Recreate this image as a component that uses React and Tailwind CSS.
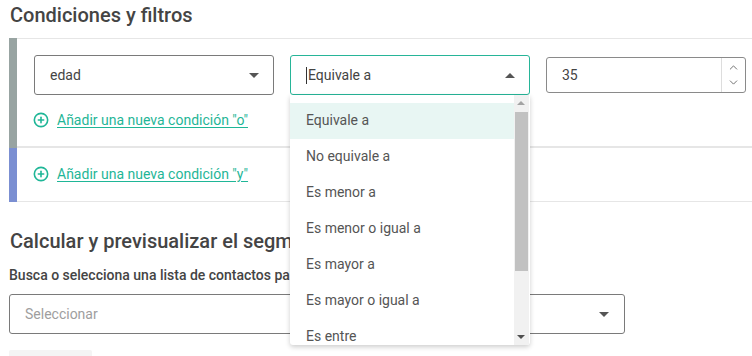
import React from "react";
import { CirclePlus, ChevronUp, ChevronDown } from "lucide-react";

const items = [
  "Equivale a",
  "No equivale a",
  "Es menor a",
  "Es menor o igual a",
  "Es mayor a",
  "Es mayor o igual a",
  "Es entre",
];

function Caret({ up }) {
  return up ? (
    <span className="block w-0 h-0 border-l-[5px] border-r-[5px] border-b-[5px] border-l-transparent border-r-transparent border-b-[#555]" />
  ) : (
    <span className="block w-0 h-0 border-l-[5px] border-r-[5px] border-t-[5px] border-l-transparent border-r-transparent border-t-[#555]" />
  );
}

function AddLink({ label }) {
  return (
    <div className="flex items-center h-[20px] text-[#1fb697]">
      <CirclePlus size={16} strokeWidth={2.4} className="ml-[-1px]" />
      <span className="ml-[8px] text-[14px] underline underline-offset-2 leading-[20px]">{label}</span>
    </div>
  );
}

export default function App() {
  return (
    <div
      className="relative w-[752px] h-[356px] overflow-hidden bg-white"
      style={{ fontFamily: "Roboto, 'Liberation Sans', sans-serif" }}
    >
      <div className="h-[38px] pt-px pl-[10px]">
        <h1 className="text-[20px] leading-[28px] font-medium text-[#444]">Condiciones y filtros</h1>
      </div>

      {/* group 1 */}
      <div className="flex">
        <div className="ml-[9px] w-[8px] bg-[#98a4a2]" />
        <div className="flex-1 border-t border-[#e6e6e6] border-b-2 border-b-[#e6e6e6] pl-[17px] pt-[16px] pb-[16px]">
          <div className="flex items-center gap-[16px]">
            <div className="w-[240px] h-[40px] border border-[#7a7a7a] rounded-[3px] flex items-center justify-between pl-[15px] pr-[14px] text-[14px] text-[#444]">
              <span>edad</span>
              <Caret />
            </div>
            <div className="w-[240px] h-[40px] border border-[#27b598] rounded-[3px] flex items-center justify-between pl-[15px] pr-[14px] text-[14px] text-[#444]">
              <span className="flex items-center">
                <span className="w-px h-[17px] bg-[#333] mr-px" />
                Equivale a
              </span>
              <Caret up />
            </div>
            <div className="w-[200px] h-[36px] border border-[#8a8a8a] rounded-[3px] flex items-stretch text-[14px] text-[#444]">
              <span className="flex-1 flex items-center pl-[15px]">35</span>
              <div className="w-[24px] border-l border-[#ddd] flex flex-col items-center justify-center text-[#6f6f6f]">
                <ChevronUp size={13} strokeWidth={1.8} />
                <ChevronDown size={13} strokeWidth={1.8} className="mt-[2px]" />
              </div>
            </div>
          </div>
          <div className="mt-[15px]">
            <AddLink label={'Añadir una nueva condición "o"'} />
          </div>
        </div>
      </div>

      {/* group 2 */}
      <div className="flex">
        <div className="ml-[9px] w-[8px] bg-[#7b8fd2]" />
        <div className="flex-1 border-b border-[#e6e6e6] pl-[17px] pt-[16px] pb-[17px]">
          <AddLink label={'Añadir una nueva condición "y"'} />
        </div>
      </div>

      {/* section 2 */}
      <div className="pl-[9px]">
        <h2 className="mt-[25px] pl-px text-[20px] leading-[28px] font-medium text-[#444]">
          Calcular y previsualizar el segmento
        </h2>
        <p className="mt-[10px] text-[14px] leading-[20px] font-medium text-[#444]">
          Busca o selecciona una lista de contactos para calcular
        </p>
        <div className="mt-[9px] w-[616px] h-[40px] border border-[#7a7a7a] rounded-[3px] flex items-center justify-between pl-[15px] pr-[15px] text-[14px] text-[#9e9e9e]">
          <span>Seleccionar</span>
          <Caret />
        </div>
        <div className="mt-[16px] w-[83px] h-[30px] bg-[#f4f4f4] rounded-[2px]" />
      </div>

      {/* dropdown */}
      <div className="absolute left-[290px] top-[95px] w-[240px] h-[250px] bg-white shadow-[0_2px_5px_rgba(0,0,0,0.2)] rounded-b-[3px] overflow-hidden">
        <div className="pt-[8px] pr-[16px]">
          {items.map((t, i) => (
            <div
              key={t}
              className={
                "h-[36px] flex items-center pl-[16px] pb-[2px] text-[14px] text-[#555] " +
                (i === 0 ? "bg-[#e8f6f3]" : "")
              }
            >
              {t}
            </div>
          ))}
        </div>
        <div className="absolute right-[1px] top-0 bottom-0 w-[15px] bg-[#f1f1f1]">
          <div className="absolute left-[3px] top-[6px] w-0 h-0 border-l-[4px] border-r-[4px] border-b-[4px] border-l-transparent border-r-transparent border-b-[#a3a3a3]" />
          <div className="absolute left-[1px] right-[1px] top-[17px] h-[159px] bg-[#c1c1c1]" />
          <div className="absolute left-[3px] bottom-[6px] w-0 h-0 border-l-[4px] border-r-[4px] border-t-[4px] border-l-transparent border-r-transparent border-t-[#505050]" />
        </div>
      </div>
    </div>
  );
}
